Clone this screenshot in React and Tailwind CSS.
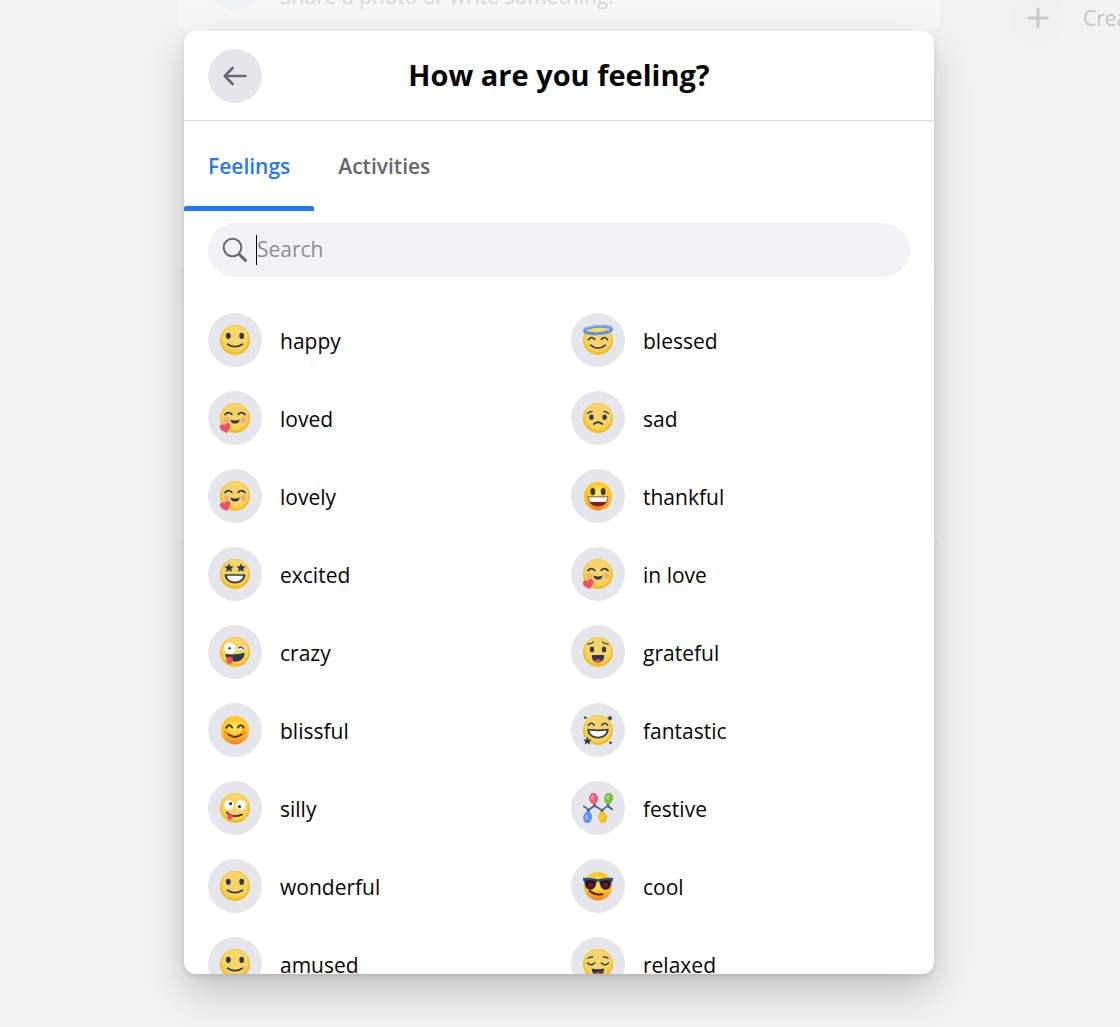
import React, { useState } from 'react';
import { clsx } from 'clsx';

const INK = '#2F3A4B';
const STAR = 'M0 -5 L1.4 -1.8 L4.9 -1.5 L2.3 0.8 L3.1 4.2 L0 2.4 L-3.1 4.2 L-2.3 0.8 L-4.9 -1.5 L-1.4 -1.8 Z';

function Face() {
    return (
        <>
            <circle cx="15" cy="15" r="15" fill="#F2BD15" />
            <circle cx="15" cy="13.8" r="13.8" fill="url(#face)" />
        </>
    );
}

function WarmFace() {
    return (
        <>
            <circle cx="15" cy="15.3" r="14.2" fill="url(#warm)" />
            <circle cx="15" cy="12" r="10" fill="url(#glow)" />
        </>
    );
}

function Line({ d, color = INK, width = 1.7 }) {
    return <path d={d} fill="none" stroke={color} strokeWidth={width} strokeLinecap="round" strokeLinejoin="round" />;
}

function Star({ x, y, scale }) {
    return <path d={STAR} fill={INK} transform={`translate(${x} ${y}) scale(${scale})`} />;
}

function Smile() {
    return (
        <>
            <Face />
            <ellipse cx="8.3" cy="10.8" rx="2.4" ry="3.1" fill={INK} />
            <ellipse cx="21.7" cy="10.8" rx="2.4" ry="3.1" fill={INK} />
            <Line d="M7.6 19.2 Q15 24.2 22.4 19.2" width={1.8} />
        </>
    );
}

function Love() {
    return (
        <>
            <Face />
            <circle cx="6.5" cy="17" r="2.8" fill="#F5A878" />
            <circle cx="23.5" cy="17" r="2.8" fill="#F5A878" />
            <Line d="M5 11.6 Q8.3 7.8 11.8 11.4" />
            <Line d="M18.2 11.4 Q21.7 7.8 25 11.6" />
            <path d="M10.2 16.4 Q15 18.4 19.8 16.4 Q18.8 20.6 15 20.6 Q11.2 20.6 10.2 16.4 Z" fill={INK} />
            <path d="M7 30 C3 28.5 -0.4 26.8 -0.2 23.8 C0 21.4 3.2 20.6 4.7 22.9 C5.2 19.6 9 19 10.2 21.5 C11.3 24.4 8.7 27.2 7 30 Z" fill="#F0506B" />
        </>
    );
}

function Excited() {
    return (
        <>
            <Face />
            <Star x={9} y={9} scale={0.95} />
            <Star x={21} y={9} scale={0.95} />
            <path d="M4.6 15.2 H25.4 C25.6 20.6 20.8 24.4 15 24.4 C9.2 24.4 4.4 20.6 4.6 15.2 Z" fill={INK} />
            <path d="M6.8 16.8 H23.2 C22.6 20.4 19 22.6 15 22.6 C11 22.6 7.4 20.4 6.8 16.8 Z" fill="#fff" />
        </>
    );
}

function Crazy() {
    return (
        <>
            <Face />
            <circle cx="9.8" cy="11.2" r="5.6" fill="#fff" />
            <circle cx="9.6" cy="11.2" r="1.2" fill={INK} />
            <path d="M16.2 13 A4.8 4.8 0 0 1 25.6 13 Z" fill="#fff" />
            <Line d="M18.6 11 Q21 8.8 23.4 11.8" width={1.2} />
            <path d="M5.4 17 Q15 18.2 24.6 15.8 C24.8 21 21 24.6 15 24.6 C9.6 24.6 5.6 21.6 5.4 17 Z" fill={INK} />
            <path d="M7 20.8 C8.6 19 12.4 19.4 13 21.6 C13.5 24 12.4 27 9.6 27 C6.8 27 5.8 23.4 7 20.8 Z" fill="#F0506B" />
        </>
    );
}

function Blissful() {
    return (
        <>
            <WarmFace />
            <circle cx="5.8" cy="17.6" r="4" fill="url(#blush)" />
            <circle cx="24.2" cy="17.6" r="4" fill="url(#blush)" />
            <Line d="M6.2 12.8 Q9.2 7.8 12.2 12.6" width={1.9} />
            <Line d="M17.8 12.6 Q20.8 7.8 23.8 12.8" width={1.9} />
            <Line d="M8.4 19.2 Q15 24.6 21.6 19.2" color="#5F2E10" width={1.9} />
        </>
    );
}

function Silly() {
    return (
        <>
            <Face />
            <circle cx="9" cy="12" r="4.8" fill="#fff" />
            <circle cx="21" cy="12" r="4.8" fill="#fff" />
            <circle cx="10.6" cy="10.7" r="1.6" fill={INK} />
            <circle cx="19.5" cy="13.6" r="1.6" fill={INK} />
            <Line d="M6.8 19.4 Q12 25.4 22 21.6" />
            <path d="M7.6 20.6 L13 22.6 C13 25.6 11.4 27 9.4 26.6 C7.2 26 6.8 23.2 7.6 20.6 Z" fill="#F0506B" />
        </>
    );
}

function Blessed() {
    return (
        <>
            <Face />
            <g transform="rotate(-4 15 5)">
                <ellipse cx="15" cy="5" rx="13.6" ry="3.6" fill="#F8D468" stroke="#5A92EE" strokeWidth="2.8" />
                <path d="M1.6 4 Q4 1 15 0.7 Q26 1 28.4 4" fill="none" stroke="#8DB9FF" strokeWidth="1" />
            </g>
            <Line d="M5.4 14.8 Q8.4 10.4 11.6 14.4" />
            <Line d="M18.4 14.4 Q21.6 10.4 24.6 14.8" />
            <Line d="M7.6 20.2 Q15 26.2 22.4 20.2" />
        </>
    );
}

function Sad() {
    return (
        <>
            <Face />
            <ellipse cx="8.4" cy="14.2" rx="2.2" ry="2.7" fill={INK} />
            <ellipse cx="21.6" cy="14.2" rx="2.2" ry="2.7" fill={INK} />
            <Line d="M4.6 10.4 Q6 8.6 9 8.4" width={1.5} />
            <Line d="M21 8.4 Q24 8.6 25.4 10.4" width={1.5} />
            <Line d="M10.8 21 Q15 17.6 19.2 21" width={1.8} />
        </>
    );
}

function Thankful() {
    return (
        <>
            <WarmFace />
            <ellipse cx="9.8" cy="10.6" rx="2.4" ry="3.7" fill={INK} />
            <ellipse cx="20.2" cy="10.6" rx="2.4" ry="3.7" fill={INK} />
            <path d="M4.6 15.6 H25.4 C25.2 22 20.8 25.4 15 25.4 C9.2 25.4 4.8 22 4.6 15.6 Z" fill="#7A2420" />
            <path d="M5.4 16.2 H24.6 C24.4 18.4 23.8 19.8 23 21 H7 C6.2 19.8 5.6 18.4 5.4 16.2 Z" fill="#fff" />
        </>
    );
}

function Grateful() {
    return (
        <>
            <Face />
            <ellipse cx="9" cy="12.4" rx="2.2" ry="2.9" fill={INK} />
            <ellipse cx="21" cy="12.4" rx="2.2" ry="2.9" fill={INK} />
            <Line d="M4.8 7.2 Q8.6 6.8 10.4 4.8" width={1.2} />
            <Line d="M19.6 4.8 Q21.4 6.8 25.2 7.2" width={1.2} />
            <path d="M8.8 18 H21.2 C21.6 22.4 19 25.6 15 25.6 C11 25.6 8.4 22.4 8.8 18 Z" fill={INK} />
            <path d="M11.2 23.8 Q15 20.8 18.8 23.8 Q17.4 25.6 15 25.6 Q12.6 25.6 11.2 23.8 Z" fill="#F0506B" />
        </>
    );
}

function Fantastic() {
    return (
        <>
            <Face />
            <Line d="M5.2 10.4 Q8.2 6.4 11.4 10.2" width={1.5} />
            <Line d="M18.6 10.2 Q21.8 6.4 24.8 10.4" width={1.5} />
            <path d="M4.4 13.8 Q15 15.2 25.6 13.8 C26 19.8 20.8 23.4 15 23.4 C9.2 23.4 4 19.8 4.4 13.8 Z" fill={INK} />
            <path d="M6.4 15.6 Q15 16.8 23.6 15.6 C23.2 19.6 19.2 21.8 15 21.8 C10.8 21.8 6.8 19.6 6.4 15.6 Z" fill="#fff" />
            <Star x={2.4} y={2.6} scale={0.4} />
            <Star x={27} y={3} scale={0.6} />
            <Star x={4.4} y={26} scale={0.85} />
            <Star x={27.6} y={27.8} scale={0.4} />
        </>
    );
}

function Festive() {
    return (
        <>
            <Line d="M0.8 13.4 Q2.6 13.8 5.4 17.2 Q8.6 14.6 11.6 12.8 Q15.4 14.8 19 17.4 Q22 14.4 25 13 Q26.6 14.6 29.2 16.2" color="#44648F" width={1.8} />
            <Line d="M11.4 13 V10.6 M25 13 V10.6 M5.4 17 V19.6 M19 17 V19.6" color="#44648F" width={2.6} />
            <ellipse cx="10.6" cy="5.4" rx="4.4" ry="5.8" fill="#EF5F7A" transform="rotate(-8 10.6 5.4)" />
            <ellipse cx="25.6" cy="5.4" rx="4.4" ry="5.8" fill="#78BC34" transform="rotate(12 25.6 5.4)" />
            <ellipse cx="4.6" cy="24.4" rx="4.4" ry="5.8" fill="#5B93FA" transform="rotate(8 4.6 24.4)" />
            <ellipse cx="19.6" cy="24.4" rx="4.4" ry="5.8" fill="#F5BE12" transform="rotate(-8 19.6 24.4)" />
            <g fill="#fff" opacity="0.35">
                <ellipse cx="9.4" cy="4.4" rx="1.5" ry="2.6" />
                <ellipse cx="24.8" cy="4.4" rx="1.5" ry="2.6" />
                <ellipse cx="3.6" cy="24" rx="1.5" ry="2.6" />
                <ellipse cx="18.6" cy="24" rx="1.5" ry="2.6" />
            </g>
        </>
    );
}

function Cool() {
    return (
        <>
            <WarmFace />
            <path d="M0 7 Q7 6 15 8.2 Q23 6 30 7 V9.6 Q28.8 10 28.6 11.4 C28 16.8 25.8 18.8 22.6 18.8 C18.8 18.8 17 15.6 16.4 11.2 Q15 10 13.6 11.2 C13 15.6 11.2 18.8 7.4 18.8 C4.2 18.8 2 16.8 1.4 11.4 Q1.2 10 0 9.6 Z" fill="#32507E" />
            <path d="M2.6 9.4 Q8 8.6 12.6 10.2 C12.4 15 10.6 18 7.4 18 C4.2 18 2.6 15 2.6 9.4 Z" fill="#2E0D16" />
            <path d="M27.4 9.4 Q22 8.6 17.4 10.2 C17.6 15 19.4 18 22.6 18 C25.8 18 27.4 15 27.4 9.4 Z" fill="#2E0D16" />
            <ellipse cx="7.6" cy="14" rx="3" ry="2.6" fill="#6A1F26" />
            <ellipse cx="22.4" cy="14" rx="3" ry="2.6" fill="#6A1F26" />
            <Line d="M6.6 19.8 Q11.6 24.6 19.4 23.2" color="#4A230C" width={1.9} />
        </>
    );
}

function Relaxed() {
    return (
        <>
            <Face />
            <Line d="M4.8 9.4 Q6.6 7.8 9.6 8" width={1.3} />
            <Line d="M20.4 8 Q23.4 7.8 25.2 9.4" width={1.3} />
            <Line d="M4.6 14 Q8 17.6 11.6 14" width={1.7} />
            <Line d="M18.4 14 Q22 17.6 25.4 14" width={1.7} />
            <path d="M8.8 19.6 Q15 21 21.2 19.6 C21.4 23.6 18.8 26.2 15 26.2 C11.2 26.2 8.6 23.6 8.8 19.6 Z" fill={INK} />
            <path d="M11.4 24.6 Q15 21.8 18.6 24.6 Q17.2 26.2 15 26.2 Q12.8 26.2 11.4 24.6 Z" fill="#F0506B" />
        </>
    );
}

const feelings = [
    { name: 'happy', Icon: Smile },
    { name: 'blessed', Icon: Blessed },
    { name: 'loved', Icon: Love },
    { name: 'sad', Icon: Sad },
    { name: 'lovely', Icon: Love },
    { name: 'thankful', Icon: Thankful },
    { name: 'excited', Icon: Excited },
    { name: 'in love', Icon: Love },
    { name: 'crazy', Icon: Crazy },
    { name: 'grateful', Icon: Grateful },
    { name: 'blissful', Icon: Blissful },
    { name: 'fantastic', Icon: Fantastic },
    { name: 'silly', Icon: Silly },
    { name: 'festive', Icon: Festive },
    { name: 'wonderful', Icon: Smile },
    { name: 'cool', Icon: Cool },
    { name: 'amused', Icon: Smile },
    { name: 'relaxed', Icon: Relaxed },
];

const tabs = ['Feelings', 'Activities'];

// Shared gradients, referenced by id from every emoji
function EmojiDefs() {
    return (
        <svg className="absolute size-0" aria-hidden="true">
            <defs>
                <radialGradient id="face" cx="0.5" cy="0.45" r="0.55">
                    <stop offset="0.7" stopColor="#F8D468" />
                    <stop offset="1" stopColor="#F5CB45" />
                </radialGradient>
                <linearGradient id="warm" x1="0" y1="0" x2="0" y2="1">
                    <stop offset="0" stopColor="#FDC423" />
                    <stop offset="0.6" stopColor="#FFC628" />
                    <stop offset="1" stopColor="#FA7F1A" />
                </linearGradient>
                <radialGradient id="glow">
                    <stop offset="0" stopColor="#FFEB5E" />
                    <stop offset="1" stopColor="#FFEB5E" stopOpacity="0" />
                </radialGradient>
                <radialGradient id="blush">
                    <stop offset="0" stopColor="#FF6A2B" stopOpacity="0.7" />
                    <stop offset="1" stopColor="#FF6A2B" stopOpacity="0" />
                </radialGradient>
            </defs>
        </svg>
    );
}

function PageBehind() {
    return (
        <div className="absolute inset-0 grid grid-cols-[minmax(0,1fr)_minmax(0,762px)_minmax(0,1fr)] overflow-hidden pr-0.5" aria-hidden="true">
            <div className="col-start-2 flex flex-col">
                <div className="flex h-[34px] items-end gap-[18px] overflow-hidden rounded-b-xl bg-[#f6f6f6] px-[30px] pb-6 shadow-[0_1px_2px_rgba(0,0,0,0.03)]">
                    <div className="size-[54px] shrink-0 rounded-full bg-[#edf1f5]" />
                    <span className="text-[21px] leading-7 text-[#d6d6d6]">Share a photo or write something.</span>
                </div>
                <div className="mt-[26px] h-[212px] rounded-xl bg-[#f5f5f5] shadow-[0_1px_2px_rgba(0,0,0,0.03)]" />
                <div className="mt-[29px] h-[244px] rounded-xl bg-[#f5f5f5] shadow-[0_1px_2px_rgba(0,0,0,0.03)]" />
            </div>
            <div className="flex h-[45px] items-end pl-[71px]">
                <div className="flex items-center gap-[18px]">
                    <div className="flex size-[54px] shrink-0 items-center justify-center rounded-full bg-[#f0f0f0]">
                        <svg className="size-6" viewBox="0 0 24 24" fill="none" stroke="#c8c8c8" strokeWidth="3" strokeLinecap="round">
                            <path d="M12 3v18M3 12h18" />
                        </svg>
                    </div>
                    <span className="pt-0.5 text-[21px] font-medium text-[#c4c4c4]">Create</span>
                </div>
            </div>
        </div>
    );
}

export default function App() {
    const [activeTab, setActiveTab] = useState('Feelings');
    const [query, setQuery] = useState('');

    const visible = feelings.filter(f => f.name.includes(query.toLowerCase()));

    return (
        <div className="relative h-screen overflow-hidden bg-[#f2f2f2] font-['Open_Sans',sans-serif]">
            <EmojiDefs />
            <PageBehind />

            <div className="relative flex h-full justify-center pt-[31px] pr-0.5 pb-[53px]">
                <div
                    role="dialog"
                    aria-labelledby="feeling-title"
                    className="flex w-full max-w-[750px] flex-col overflow-hidden rounded-xl bg-white shadow-[0_18px_42px_rgba(0,0,0,0.2),0_3px_6px_rgba(0,0,0,0.1)]"
                >
                    {/* Header */}
                    <header className="grid h-[90px] shrink-0 grid-cols-[54px_1fr_54px] items-center border-b border-[#dddee1] px-6">
                        <button className="flex size-[54px] items-center justify-center rounded-full bg-[#e4e6eb]" aria-label="Back">
                            <svg className="size-6" viewBox="0 0 24 24" fill="none" stroke="#626973" strokeWidth="2.6" strokeLinecap="round" strokeLinejoin="round">
                                <path d="M9.6 4L1.8 12L9.6 20M2.4 12H22.4" />
                            </svg>
                        </button>
                        <h1 id="feeling-title" className="pb-0.5 text-center text-[29px] font-bold text-[#050505]">How are you feeling?</h1>
                    </header>

                    {/* Tabs */}
                    <div role="tablist" className="flex h-[90px] shrink-0">
                        {tabs.map(tab => (
                            <button
                                key={tab}
                                role="tab"
                                aria-selected={tab === activeTab}
                                onClick={() => setActiveTab(tab)}
                                className={clsx(
                                    'flex flex-col px-6 text-[21px] font-semibold',
                                    tab === activeTab ? 'text-[#2478f5]' : 'text-[#65676b]'
                                )}
                            >
                                <span className="flex flex-1 items-center pt-0.5">{tab}</span>
                                {tab === activeTab && <span className="-mx-6 -mt-[5px] h-[5px] self-stretch rounded-t-xs bg-[#2478f5]" />}
                            </button>
                        ))}
                    </div>

                    {/* Search */}
                    <label className="mx-6 mt-3 mb-6 flex h-[54px] shrink-0 items-center gap-2 rounded-full bg-[#f0f2f5] px-3.5">
                        <svg className="size-[26px] shrink-0" viewBox="0 0 26 26" fill="none" stroke="#626973" strokeLinecap="round">
                            <circle cx="10.5" cy="10.5" r="8.8" strokeWidth="2" />
                            <path d="M17.2 17.2L23.4 23.4" strokeWidth="3" />
                        </svg>
                        <input
                            type="text"
                            value={query}
                            onChange={e => setQuery(e.target.value)}
                            placeholder="Search"
                            aria-label="Search"
                            className="h-[30px] min-w-0 flex-1 border-l border-black text-[21px] text-[#050505] caret-transparent outline-none placeholder:text-[#8a8d91]"
                        />
                    </label>

                    {/* Feelings */}
                    <div className="grid min-h-0 flex-1 auto-rows-max grid-cols-2 overflow-hidden px-3">
                        {visible.map(({ name, Icon }) => (
                            <button key={name} className="flex items-center gap-[18px] p-3 text-left text-[21px] text-[#050505]">
                                <span className="flex size-[54px] shrink-0 items-center justify-center rounded-full bg-[#e4e6eb]">
                                    <svg className="size-[30px]" viewBox="0 0 30 30" aria-hidden="true">
                                        <Icon />
                                    </svg>
                                </span>
                                <span className="pt-1">{name}</span>
                            </button>
                        ))}
                    </div>
                </div>
            </div>
        </div>
    );
}
